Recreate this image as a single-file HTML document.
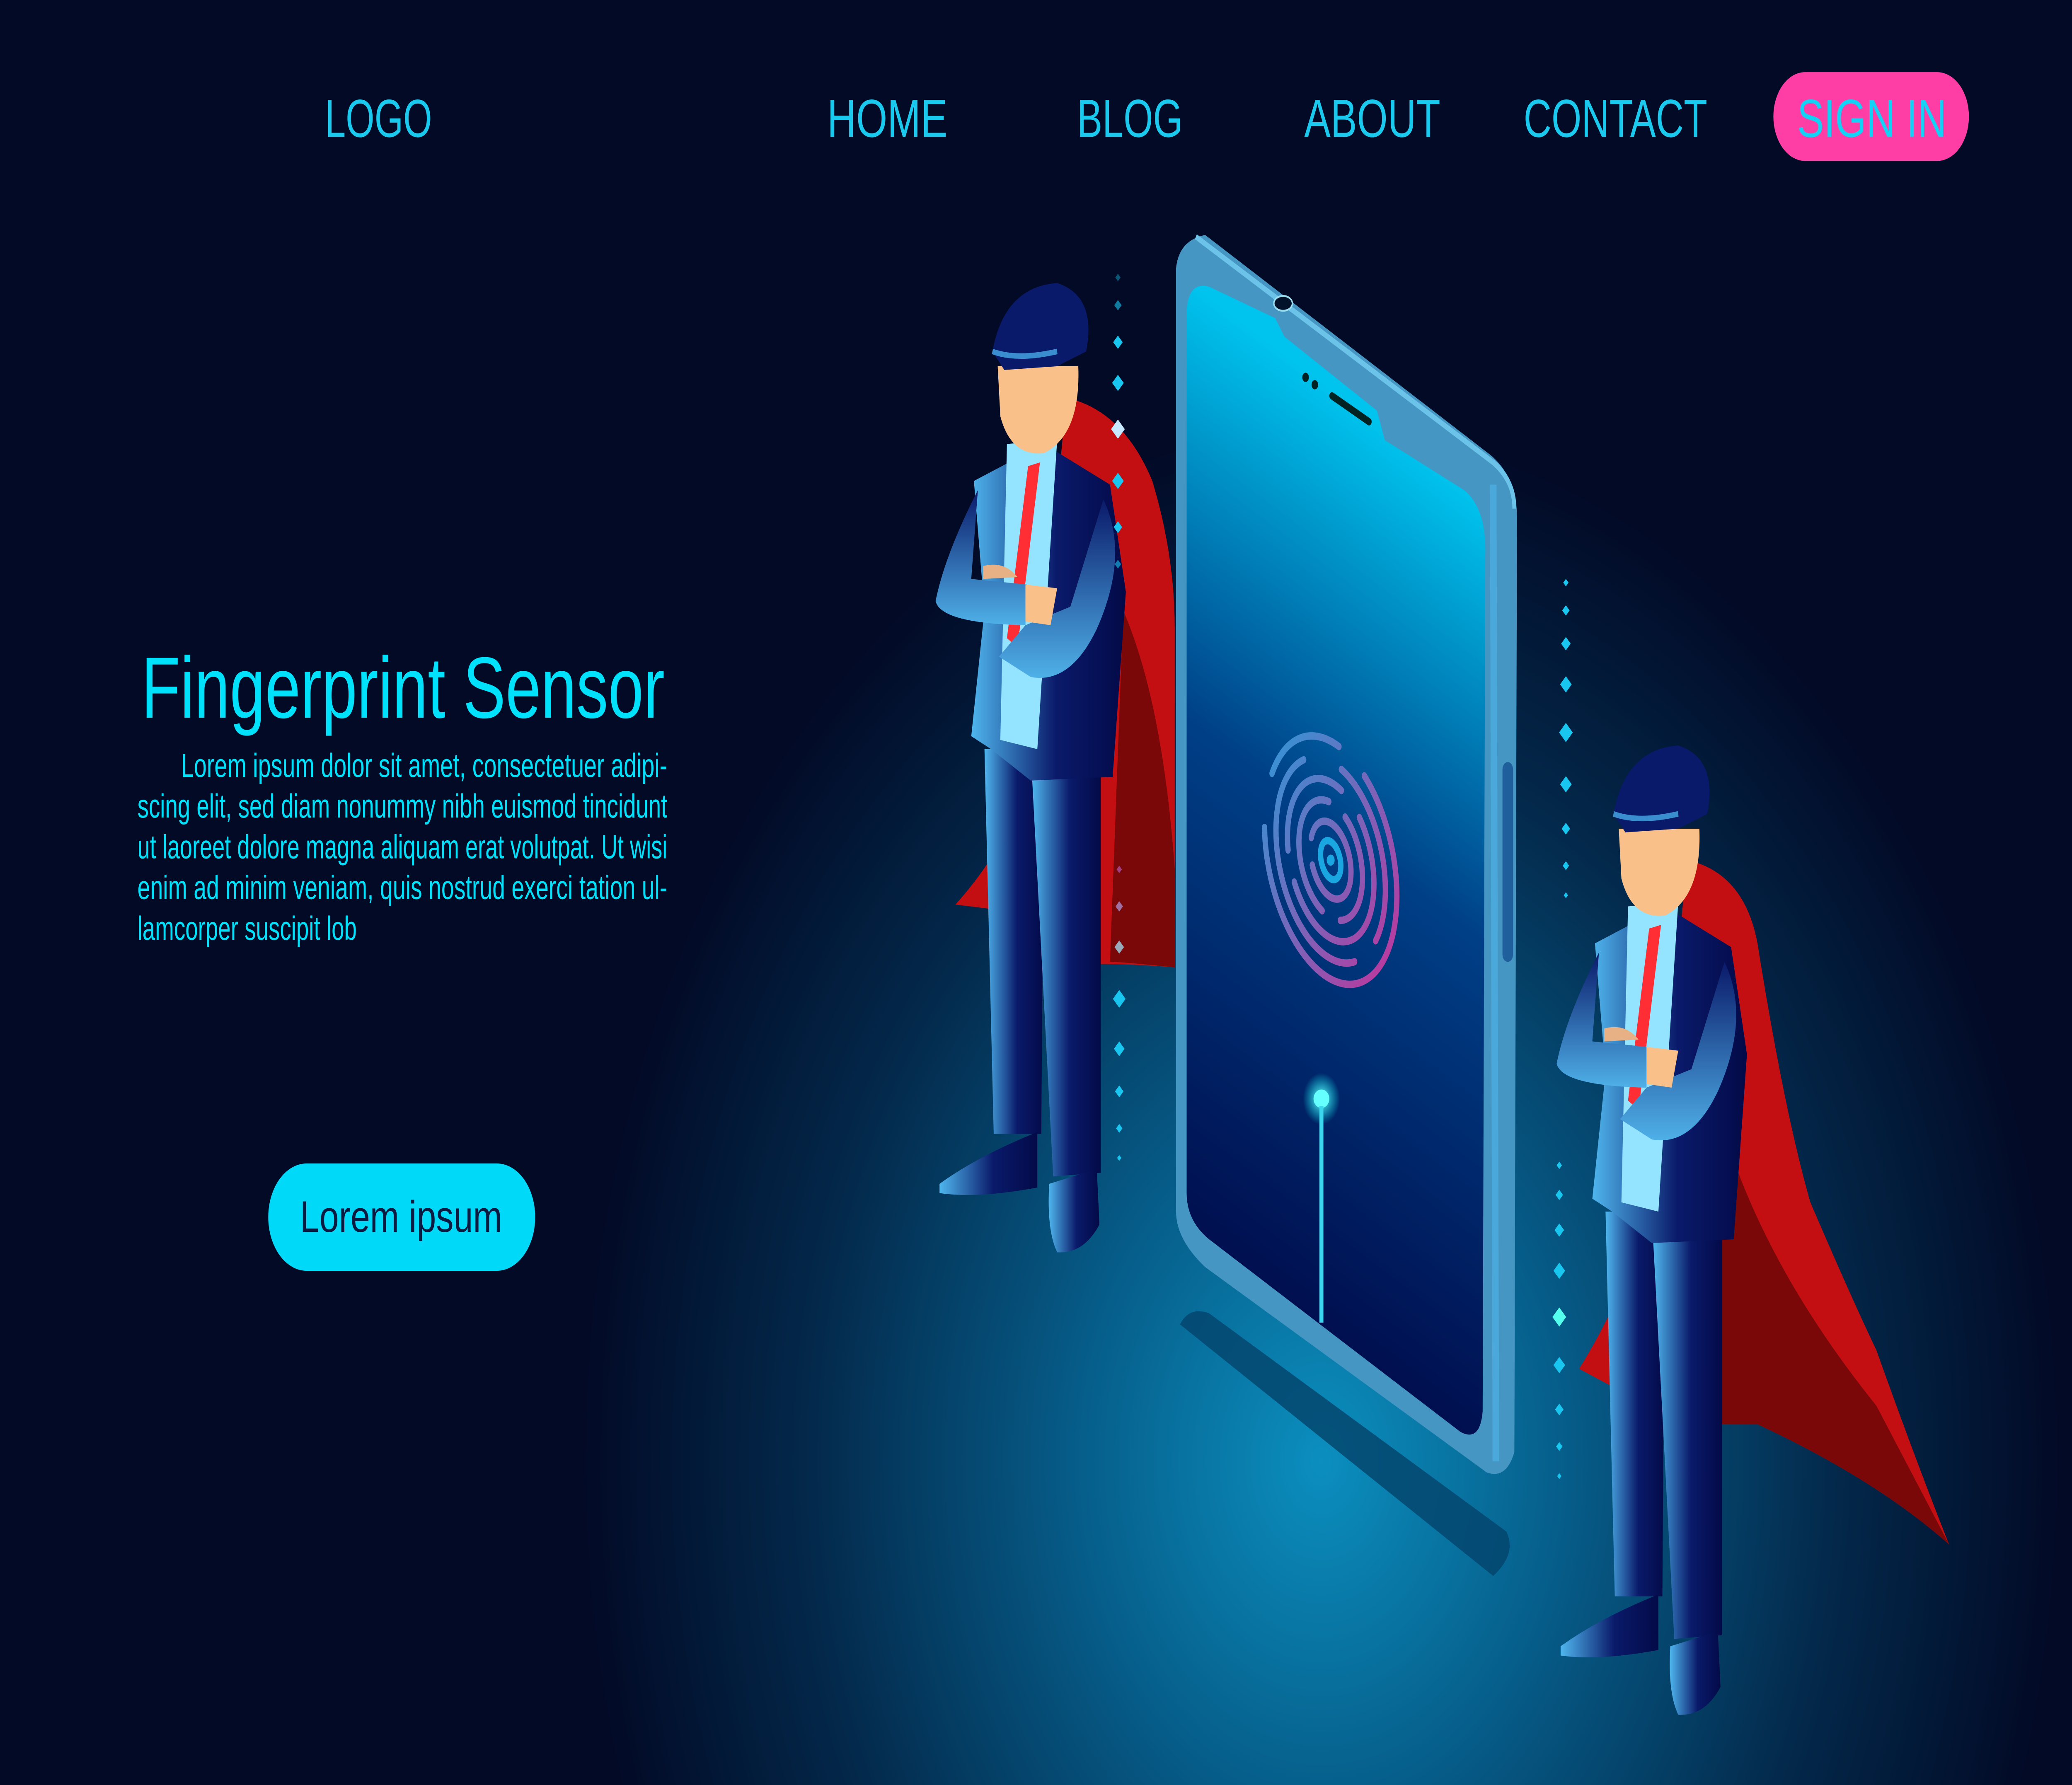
<!DOCTYPE html>
<html><head><meta charset="utf-8"><style>
html,body{margin:0;padding:0;background:#020924;overflow:hidden;width:100%;height:100%}
svg{display:block;width:100vw;height:100vh;position:fixed;left:0;top:0}
text{font-family:"Liberation Sans",sans-serif}
</style></head><body>
<svg viewBox="0 0 1568 965" preserveAspectRatio="none" xmlns="http://www.w3.org/2000/svg">
<defs>
<radialGradient id="bg" cx="1000" cy="790" r="560" gradientUnits="userSpaceOnUse">
<stop offset="0" stop-color="#0b8fbf"/><stop offset="0.35" stop-color="#065a86"/><stop offset="0.7" stop-color="#03284a"/><stop offset="1" stop-color="#020a26"/>
</radialGradient>
<linearGradient id="scr" x1="1120" y1="270" x2="900" y2="680" gradientUnits="userSpaceOnUse">
<stop offset="0" stop-color="#00c4ee"/><stop offset="0.45" stop-color="#003f86"/><stop offset="1" stop-color="#000c4c"/>
</linearGradient>
<linearGradient id="fp" x1="950" y1="380" x2="1065" y2="560" gradientUnits="userSpaceOnUse">
<stop offset="0" stop-color="#1aa6e0"/><stop offset="1" stop-color="#e0208f"/>
</linearGradient>
<linearGradient id="suit" x1="0" y1="0" x2="1" y2="0">
<stop offset="0" stop-color="#4fb6ee"/><stop offset="0.55" stop-color="#0a1a6a"/><stop offset="1" stop-color="#030a48"/>
</linearGradient>
<linearGradient id="arm" x1="0" y1="0" x2="0" y2="1">
<stop offset="0" stop-color="#0a1a6a"/><stop offset="1" stop-color="#4fb0e8"/>
</linearGradient>
<radialGradient id="glow"><stop offset="0" stop-color="#7ff" stop-opacity="1"/><stop offset="1" stop-color="#0ff" stop-opacity="0"/></radialGradient>
<g id="man">
<path d="M745 405 L790 405 L788 613 L752 613 Z" fill="url(#suit)"/>
<path d="M781 420 L833 418 L833 634 L797 636 Z" fill="url(#suit)"/>
<path d="M711 640 Q740 625 785 612 L785 642 Q740 648 711 645 Z" fill="url(#suit)"/>
<path d="M794 640 L830 632 L832 662 Q820 678 800 677 Q792 665 794 640 Z" fill="url(#suit)"/>
<path d="M737 260 L790 240 L840 262 L852 320 L842 420 L780 422 L750 405 L735 398 L745 330 Z" fill="url(#suit)"/>
<path d="M762 240 L800 238 L785 405 L757 400 Z" fill="#95e4ff"/>
<path d="M778 252 L787 250 L770 350 L762 345 Z" fill="#ff2e35"/>
<path d="M740 265 Q715 300 708 325 Q712 337 776 338 L777 316 L735 313 Z" fill="url(#arm)"/>
<path d="M835 270 Q855 300 830 340 Q810 370 780 366 L756 355 L776 338 L810 328 Z" fill="url(#arm)"/>
<path d="M776 316 L800 318 L795 338 L776 336 Z" fill="#f9c08a"/>
<path d="M744 306 Q760 303 770 312 L744 313 Z" fill="#e8b085"/>
<path d="M755 198 L816 198 Q818 235 790 245 Q765 247 757 225 Z" fill="#f9c08a"/>
<path d="M751 190 Q760 155 800 153 Q830 160 822 190 L800 198 L760 200 Z" fill="#0a1a6a"/>
<path d="M751 190 Q770 195 800 190" stroke="#3a8ed0" stroke-width="3" fill="none"/>
</g>
<g id="diam">
<path d="M0 -4 L4 0 L0 4 L-4 0 Z"/>
</g>
</defs>
<rect width="1568" height="965" fill="#020a26"/>
<rect width="1568" height="965" fill="url(#bg)"/>

<g fill="#19c9ee" font-size="29">
<text x="246" y="74" textLength="81" lengthAdjust="spacingAndGlyphs">LOGO</text>
<text x="626" y="74" textLength="91" lengthAdjust="spacingAndGlyphs">HOME</text>
<text x="815" y="74" textLength="80" lengthAdjust="spacingAndGlyphs">BLOG</text>
<text x="987" y="74" textLength="103" lengthAdjust="spacingAndGlyphs">ABOUT</text>
<text x="1153" y="74" textLength="139" lengthAdjust="spacingAndGlyphs">CONTACT</text>
</g>
<rect x="1342" y="39" width="148" height="48" rx="24" fill="#ff3ea5"/>
<text x="1360" y="74" font-size="29" fill="#12d2f5" textLength="113" lengthAdjust="spacingAndGlyphs">SIGN IN</text>

<text x="107" y="388" font-size="47" fill="#00e2fb" textLength="396" lengthAdjust="spacingAndGlyphs">Fingerprint Sensor</text>
<g fill="#00e2fb" font-size="18">
<text x="137" y="420" textLength="368" lengthAdjust="spacingAndGlyphs">Lorem ipsum dolor sit amet, consectetuer adipi-</text>
<text x="104" y="442" textLength="401" lengthAdjust="spacingAndGlyphs">scing elit, sed diam nonummy nibh euismod tincidunt</text>
<text x="104" y="464" textLength="401" lengthAdjust="spacingAndGlyphs">ut laoreet dolore magna aliquam erat volutpat. Ut wisi</text>
<text x="104" y="486" textLength="401" lengthAdjust="spacingAndGlyphs">enim ad minim veniam, quis nostrud exerci tation ul-</text>
<text x="104" y="508" textLength="166" lengthAdjust="spacingAndGlyphs">lamcorper suscipit lob</text>
</g>
<rect x="203" y="629" width="202" height="58" rx="29" fill="#00d9f7"/>
<text x="227" y="666" font-size="24" fill="#0a1a40" textLength="153" lengthAdjust="spacingAndGlyphs">Lorem ipsum</text>

<path d="M807 215 Q850 222 872 260 Q889 300 889 340 L889 523 Q840 520 800 522 L790 495 L723 489 Q760 460 780 420 Z" fill="#c40f12"/>
<path d="M850 330 Q880 380 889 470 L889 523 Q850 520 840 520 Z" fill="#7a0809"/>
<use href="#man"/>

<path d="M893 716 Q900 706 915 710 L1140 828 Q1148 840 1130 852 Z" fill="#03466e" opacity="0.85"/>
<path d="M890 145 Q892 130 912 127 L1128 246 Q1148 258 1148 280 L1146 785 Q1140 800 1125 796 L912 685 Q890 670 890 655 Z" fill="#4596c2"/>
<path d="M905 128 L1130 250 Q1146 260 1146 275" stroke="#6cc3ea" stroke-width="3" fill="none"/>
<path d="M1130 262 L1132 790" stroke="#4aa8da" stroke-width="5"/>
<path d="M898 167 Q900 152 915 155 L965 172 L972 182 L1042 222 L1048 238 L1108 265 Q1125 275 1124 300 L1122 763 Q1120 780 1105 774 L915 670 Q898 660 898 645 Z" fill="url(#scr)"/>
<ellipse cx="971" cy="164" rx="7" ry="4" fill="#02122a" stroke="#9de" stroke-width="1"/>
<circle cx="988" cy="204" r="2.5" fill="#022"/>
<circle cx="995" cy="208" r="2.5" fill="#022"/>
<path d="M1008 214 L1036 228" stroke="#022" stroke-width="4" stroke-linecap="round"/>
<rect x="1137" y="412" width="8" height="108" rx="4" fill="#1f5f9c"/>
<g fill="none" stroke="url(#fp)" stroke-width="4" stroke-linecap="round" transform="rotate(-22 1007 465)">
<ellipse cx="1007" cy="465" rx="46" ry="70" stroke-dasharray="220 30 60 25"/>
<ellipse cx="1007" cy="465" rx="38" ry="58" stroke-dasharray="60 20 150 30"/>
<ellipse cx="1007" cy="465" rx="30" ry="46" stroke-dasharray="120 18 70 20"/>
<ellipse cx="1007" cy="465" rx="22" ry="34" stroke-dasharray="50 15 80 15"/>
<ellipse cx="1007" cy="465" rx="14" ry="22" stroke-dasharray="60 15"/>
<ellipse cx="1007" cy="465" rx="7" ry="11" stroke="#1aa6e0"/>
<circle cx="1007" cy="465" r="3" fill="#1aa6e0" stroke="none"/>
</g>
<circle cx="1000" cy="594" r="14" fill="url(#glow)"/>
<ellipse cx="1000" cy="594" rx="6" ry="5" fill="#6ff"/>
<path d="M1000 598 L1000 715" stroke="#3cd6ee" stroke-width="3"/>

<g fill="#18c6f0">
<use href="#diam" transform="translate(846 150) scale(0.5)" opacity="0.4"/>
<use href="#diam" transform="translate(846 165) scale(0.7)" opacity="0.6"/>
<use href="#diam" transform="translate(846 185) scale(0.9)"/>
<use href="#diam" transform="translate(846 207) scale(1.1)"/>
<use href="#diam" transform="translate(846 232) scale(1.3)" fill="#c8e8ff"/>
<use href="#diam" transform="translate(846 260) scale(1.1)"/>
<use href="#diam" transform="translate(846 285) scale(0.8)"/>
<use href="#diam" transform="translate(846 305) scale(0.6)" opacity="0.6"/>
<use href="#diam" transform="translate(847 470) scale(0.5)" fill="#a04080"/>
<use href="#diam" transform="translate(847 490) scale(0.7)" fill="#a070a0"/>
<use href="#diam" transform="translate(847 512) scale(0.9)" fill="#9ab"/>
<use href="#diam" transform="translate(847 540) scale(1.2)"/>
<use href="#diam" transform="translate(847 567) scale(1)"/>
<use href="#diam" transform="translate(847 590) scale(0.8)"/>
<use href="#diam" transform="translate(847 610) scale(0.6)"/>
<use href="#diam" transform="translate(847 626) scale(0.4)"/>
<use href="#diam" transform="translate(1185 315) scale(0.5)"/>
<use href="#diam" transform="translate(1185 330) scale(0.7)"/>
<use href="#diam" transform="translate(1185 348) scale(0.9)"/>
<use href="#diam" transform="translate(1185 370) scale(1.1)"/>
<use href="#diam" transform="translate(1185 396) scale(1.3)"/>
<use href="#diam" transform="translate(1185 424) scale(1.1)"/>
<use href="#diam" transform="translate(1185 448) scale(0.8)"/>
<use href="#diam" transform="translate(1185 468) scale(0.6)"/>
<use href="#diam" transform="translate(1185 484) scale(0.4)"/>
<use href="#diam" transform="translate(1180 630) scale(0.5)"/>
<use href="#diam" transform="translate(1180 646) scale(0.7)"/>
<use href="#diam" transform="translate(1180 665) scale(0.9)"/>
<use href="#diam" transform="translate(1180 687) scale(1.1)"/>
<use href="#diam" transform="translate(1180 712) scale(1.3)" fill="#5fe"/>
<use href="#diam" transform="translate(1180 738) scale(1.1)"/>
<use href="#diam" transform="translate(1180 762) scale(0.8)"/>
<use href="#diam" transform="translate(1180 782) scale(0.6)"/>
<use href="#diam" transform="translate(1180 798) scale(0.4)"/>
</g>

<path d="M1277 465 Q1320 472 1330 510 Q1350 600 1370 650 Q1400 700 1420 730 Q1450 790 1475 835 Q1420 800 1330 770 L1260 765 L1195 740 Q1230 700 1250 650 Z" fill="#c40f12"/>
<path d="M1300 600 Q1330 680 1420 760 L1475 835 Q1420 800 1330 770 L1300 770 Z" fill="#7a0809"/>
<use href="#man" transform="translate(470 250)"/>
</svg>
</body></html>
